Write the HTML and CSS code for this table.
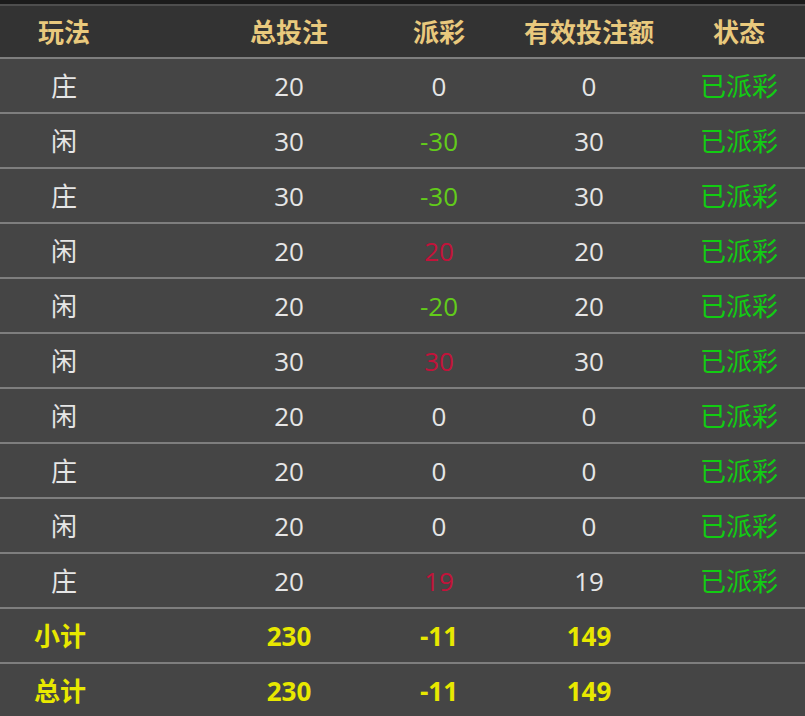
FILE: index.html
```html
<!DOCTYPE html>
<html lang="zh-CN">
<head>
  <meta charset="UTF-8" />
  <meta name="viewport" content="width=device-width, initial-scale=1" />
  <title>投注记录</title>
  <link rel="stylesheet" href="styles.css">
</head>
<body>
  <div class="top-strip"></div>

  <div class="bet-table">
    <div class="row head">
      <div class="cell play">玩法</div>
      <div class="cell">总投注</div>
      <div class="cell">派彩</div>
      <div class="cell">有效投注额</div>
      <div class="cell">状态</div>
    </div>

    <div class="row">
      <div class="cell play">庄</div>
      <div class="cell">20</div>
      <div class="cell">0</div>
      <div class="cell">0</div>
      <div class="cell done">已派彩</div>
    </div>
    <div class="row">
      <div class="cell play">闲</div>
      <div class="cell">30</div>
      <div class="cell lose">-30</div>
      <div class="cell">30</div>
      <div class="cell done">已派彩</div>
    </div>
    <div class="row">
      <div class="cell play">庄</div>
      <div class="cell">30</div>
      <div class="cell lose">-30</div>
      <div class="cell">30</div>
      <div class="cell done">已派彩</div>
    </div>
    <div class="row">
      <div class="cell play">闲</div>
      <div class="cell">20</div>
      <div class="cell win">20</div>
      <div class="cell">20</div>
      <div class="cell done">已派彩</div>
    </div>
    <div class="row">
      <div class="cell play">闲</div>
      <div class="cell">20</div>
      <div class="cell lose">-20</div>
      <div class="cell">20</div>
      <div class="cell done">已派彩</div>
    </div>
    <div class="row">
      <div class="cell play">闲</div>
      <div class="cell">30</div>
      <div class="cell win">30</div>
      <div class="cell">30</div>
      <div class="cell done">已派彩</div>
    </div>
    <div class="row">
      <div class="cell play">闲</div>
      <div class="cell">20</div>
      <div class="cell">0</div>
      <div class="cell">0</div>
      <div class="cell done">已派彩</div>
    </div>
    <div class="row">
      <div class="cell play">庄</div>
      <div class="cell">20</div>
      <div class="cell">0</div>
      <div class="cell">0</div>
      <div class="cell done">已派彩</div>
    </div>
    <div class="row">
      <div class="cell play">闲</div>
      <div class="cell">20</div>
      <div class="cell">0</div>
      <div class="cell">0</div>
      <div class="cell done">已派彩</div>
    </div>
    <div class="row">
      <div class="cell play">庄</div>
      <div class="cell">20</div>
      <div class="cell win">19</div>
      <div class="cell">19</div>
      <div class="cell done">已派彩</div>
    </div>

    <!-- 合计 -->
    <div class="row sum">
      <div class="cell play">小计</div>
      <div class="cell">230</div>
      <div class="cell">-11</div>
      <div class="cell">149</div>
      <div class="cell"></div>
    </div>
    <div class="row sum">
      <div class="cell play">总计</div>
      <div class="cell">230</div>
      <div class="cell">-11</div>
      <div class="cell">149</div>
      <div class="cell"></div>
    </div>
  </div>
</body>
</html>
```

FILE: styles.css
```css
body {
  margin: 0;
  padding: 0;
  background: #454545;
  font-family: 'Open Sans', 'Noto Sans CJK SC', sans-serif;
  font-size: 26px;
  color: #e6e6e6;
  overflow: hidden;
}
.top-strip {
  height: 4px;
  background: #1b1b1b;
}
.bet-table {
  width: 814px;
}
.row {
  display: grid;
  grid-template-columns: 214px repeat(4, 150px);
  height: 53px;
  border-top: 2px solid #7e7e7e;
  background: #454545;
}
.row.head {
  height: 51px;
  border-top: 2px solid #4e4e4e;
  background: #333333;
  color: #e9c97d;
  font-weight: 700;
}
.cell {
  display: flex;
  align-items: center;
  justify-content: center;
  line-height: 1;
  white-space: nowrap;
}
.cell.play {
  padding-right: 86px;
}
.lose {
  color: #62cc1a;
}
.win {
  color: #c3123a;
}
.done {
  color: #12cc12;
}
.row.sum {
  color: #e8e800;
  font-weight: 700;
}
.row.sum .play {
  padding-right: 94px;
}
```
